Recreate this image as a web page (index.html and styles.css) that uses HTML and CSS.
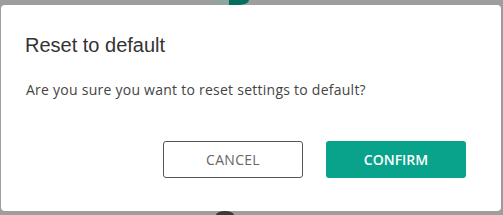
FILE: index.html
```html
<!DOCTYPE html>
<html>
<head>
  <title>Reset to default</title>
  <meta charset="UTF-8">
  <link rel="stylesheet" href="styles.css">
</head>
<body>
  <div class="backdrop-thumb"></div>
  <div class="backdrop-dot"></div>

  <div class="dialog">
    <h2 class="dialog-title">Reset to default</h2>
    <p class="dialog-text">Are you sure you want to reset settings to default?</p>
    <div class="dialog-actions">
      <button class="btn btn-cancel">CANCEL</button>
      <button class="btn btn-confirm">CONFIRM</button>
    </div>
  </div>
</body>
</html>
```

FILE: styles.css
```css
html {
  overflow: hidden;
}

body {
  margin: 0;
  padding: 5px 2px 0 1px;
  background-color: #9e9e9e;
  font-family: "Open Sans", Arial, sans-serif;
  position: relative;
  height: 215px;
  box-sizing: border-box;
  overflow: hidden;
}

/* bits of the page behind the overlay */
.backdrop-thumb {
  position: absolute;
  left: 213px;
  top: 0;
  width: 36px;
  height: 5px;
  border-radius: 0 0 10px 10px / 0 0 5px 5px;
  background: linear-gradient(to right, #8ea69e 0, #8ea69e 45%, #00705d 45%, #00705d 100%);
}

.backdrop-dot {
  position: absolute;
  left: 216px;
  top: 211px;
  width: 18px;
  height: 4px;
  border-radius: 9px 9px 0 0 / 4px 4px 0 0;
  background-color: #3a3a3a;
}

.dialog {
  position: relative;
  background-color: #fff;
  border-radius: 4px;
  height: 206px;
  box-sizing: border-box;
  padding: 28px 35px 0 24px;
}

.dialog-title {
  margin: 0;
  font-family: "Liberation Sans", Arial, sans-serif;
  font-weight: normal;
  font-size: 20px;
  line-height: 24px;
  color: #333;
}

.dialog-text {
  margin: 23px 0 0 1px;
  font-size: 14px;
  line-height: 20px;
  letter-spacing: 0.25px;
  color: #444;
}

.dialog-actions {
  display: flex;
  justify-content: flex-end;
  gap: 23px;
  margin-top: 41px;
}

.btn {
  width: 140px;
  height: 37px;
  border-radius: 3px;
  font-family: "Open Sans", Arial, sans-serif;
  font-size: 14px;
  cursor: pointer;
  padding: 0;
}

.btn-cancel {
  background-color: #fff;
  border: 1px solid #555;
  color: #666;
  letter-spacing: 0.3px;
}

.btn-confirm {
  background-color: #08a38a;
  border: none;
  color: #fff;
  font-weight: 600;
}
```
